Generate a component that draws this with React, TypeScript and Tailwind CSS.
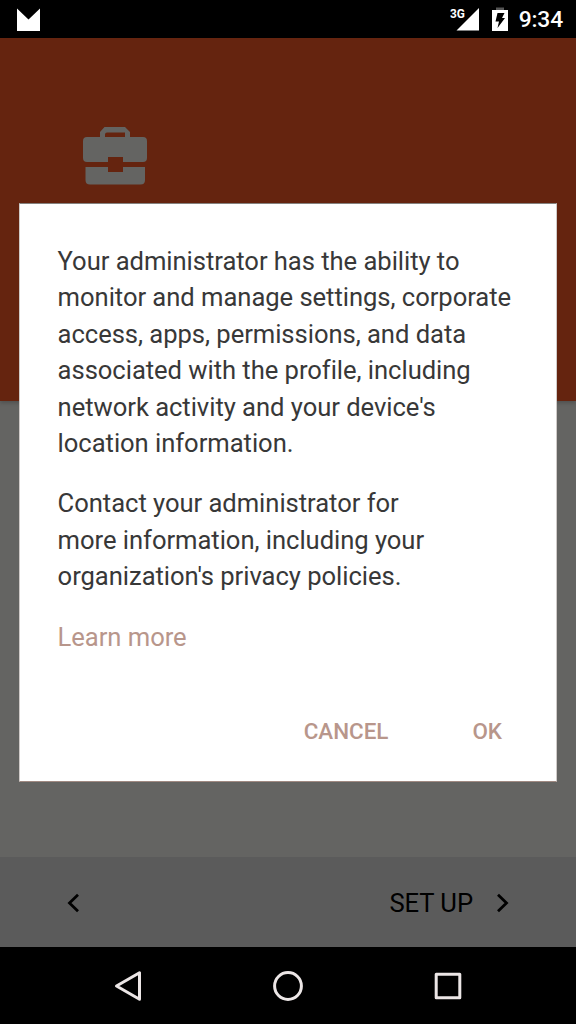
import React from "react";

const intro = [
  "Your administrator has the ability to",
  "monitor and manage settings, corporate",
  "access, apps, permissions, and data",
  "associated with the profile, including",
  "network activity and your device's",
  "location information.",
];

const contact = [
  "Contact your administrator for",
  "more information, including your",
  "organization's privacy policies.",
];

function Paragraph({ lines }: { lines: string[] }) {
  return (
    <p>
      {lines.map((line) => (
        <span key={line} className="block whitespace-nowrap">
          {line}
        </span>
      ))}
    </p>
  );
}

function StatusBar() {
  return (
    <div className="flex h-[38px] shrink-0 items-start bg-black pl-[17px] pr-[13px] text-white">
      <svg className="mt-2 h-[23px] w-[23px]" viewBox="0 0 23 23" fill="white">
        <path d="M0 0.5 L11.5 11.5 L23 0.5 V23 H0 Z" />
      </svg>
      <div className="ml-auto flex">
        <span className="mt-[6px] origin-left scale-x-[0.88] text-[13.5px] leading-[15px] font-bold tracking-[-0.2px]">3G</span>
        <svg className="-ml-[11px] mt-2 h-[23px] w-[23px]" viewBox="0 0 23 23" fill="white">
          <path d="M23 0 V22.5 H0.5 Z" />
        </svg>
        <svg className="ml-[13px] mt-[7px] h-6 w-4" viewBox="0 0 16 24">
          <path d="M0 3 H16 V24 H0 Z" fill="white" />
          <path d="M4 0.5 H12 V3 H4 Z" fill="#555" />
          <path d="M5.5 6 H12.5 L10 11 H13 L5.5 21 L7 14.5 H3.5 Z" fill="black" />
        </svg>
        <span className="ml-[11px] mt-[6px] text-[22.8px] leading-[27px] font-medium tracking-[-0.15px]">9:34</span>
      </div>
    </div>
  );
}

function Chevron({ flip = false }: { flip?: boolean }) {
  return (
    <svg
      className={flip ? "h-5 w-3 rotate-180" : "h-5 w-3"}
      viewBox="0 0 12 20"
      fill="none"
      stroke="black"
      strokeWidth="2.8"
    >
      <path d="M11 1.8 L2.5 10 L11 18.2" />
    </svg>
  );
}

export default function App() {
  return (
    <div className="relative flex h-[1024px] w-[576px] flex-col overflow-hidden bg-[#646462] font-['Roboto',sans-serif]">
      <StatusBar />
      <header className="h-[363px] shrink-0 bg-[#65240f] pl-[83px] pt-[89px] shadow-[0_2px_4px_rgba(0,0,0,0.2)]">
        <svg className="h-[58px] w-16" viewBox="0 0 64 58" fill="#646462">
          <path
            fillRule="evenodd"
            d="M17 10 V5 L21.5 0 H42 L47 5 V10 H60 Q64 10 64 14 V31 Q64 35 60 35 H40 V30 H25 V35 H4 Q0 35 0 31 V14 Q0 10 4 10 Z M22 10 H42 V5.5 H24 Q22 5.5 22 7.5 Z"
          />
          <path d="M2.5 40 H25 V45 H40 V40 H62 V53 Q62 57.5 57.5 57.5 H7 Q2.5 57.5 2.5 53 Z" />
        </svg>
      </header>
      <main className="grow" />
      <footer className="flex h-[90px] shrink-0 items-center bg-[#5b5b5b] pl-[67px] pr-[67px] pt-px">
        <button aria-label="Back">
          <Chevron />
        </button>
        <button className="ml-auto flex items-center gap-[24px] text-[25.6px] leading-8 text-black">
          <span className="pt-px tracking-[-0.05px]">SET UP</span>
          <Chevron flip />
        </button>
      </footer>
      <nav className="flex h-[77px] shrink-0 items-center justify-center gap-32 bg-black">
        <svg className="h-8 w-8" viewBox="0 0 32 32" fill="none" stroke="#ece6e6" strokeWidth="3" strokeLinejoin="round">
          <path d="M4.5 16 L27.5 2.8 V29.2 Z" />
        </svg>
        <svg className="h-8 w-8" viewBox="0 0 32 32" fill="none" stroke="#ece6e6" strokeWidth="3">
          <circle cx="16" cy="16" r="13.4" />
        </svg>
        <svg className="h-8 w-8" viewBox="0 0 32 32" fill="none" stroke="#ece6e6" strokeWidth="3" strokeLinejoin="round">
          <rect x="4.2" y="4.2" width="23.6" height="23.6" />
        </svg>
      </nav>

      <div
        role="dialog"
        className="absolute left-[19px] top-[203px] flex h-[579px] w-[538px] flex-col border border-x-[#cfcac8] border-t-[#85827f] border-b-[#a08a82] bg-white pr-[38px] pl-[37.6px] pt-[39px]"
      >
        <div className="flex flex-col gap-6 text-[25.6px] leading-[36.4px] tracking-[-0.045px] text-[#383838]">
          <Paragraph lines={intro} />
          <Paragraph lines={contact} />
          <a className="text-[#b8968b]">Learn more</a>
        </div>
        <div className="mt-[61px] flex justify-end gap-[84px] pr-4 text-[22.4px] leading-[30px] font-medium text-[#b8968b]">
          <button>CANCEL</button>
          <button>OK</button>
        </div>
      </div>
    </div>
  );
}
